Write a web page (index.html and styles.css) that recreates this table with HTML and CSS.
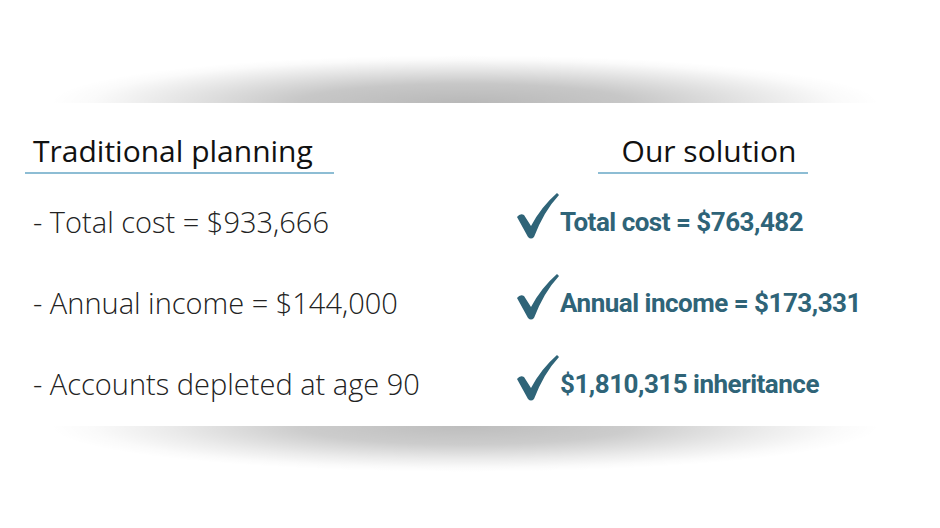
FILE: index.html
```html
<!DOCTYPE html>
<html>
<head>
<meta charset="utf-8">
<link rel="stylesheet" href="styles.css">
</head>
<body>
<div class="page">
  <div class="shadow shadow-top"></div>
  <section class="card">
    <div class="col col-left">
      <h2 class="head head-left">Traditional planning</h2>
      <p class="item">- Total cost = $933,666</p>
      <p class="item">- Annual income = $144,000</p>
      <p class="item">- Accounts depleted at age 90</p>
    </div>
    <div class="col col-right">
      <h2 class="head head-right">Our solution</h2>
      <p class="good"><svg class="check" viewBox="0 0 44 46" width="44" height="46"><path d="M1,24 Q4,20 8,22 L15,33 Q25,14 41,0 L43,2 Q28,18 18,44 Q15,47 12,44 Z"/></svg><span>Total cost = $763,482</span></p>
      <p class="good"><svg class="check" viewBox="0 0 44 46" width="44" height="46"><path d="M1,24 Q4,20 8,22 L15,33 Q25,14 41,0 L43,2 Q28,18 18,44 Q15,47 12,44 Z"/></svg><span>Annual income = $173,331</span></p>
      <p class="good"><svg class="check" viewBox="0 0 44 46" width="44" height="46"><path d="M1,24 Q4,20 8,22 L15,33 Q25,14 41,0 L43,2 Q28,18 18,44 Q15,47 12,44 Z"/></svg><span>$1,810,315 inheritance</span></p>
    </div>
  </section>
  <div class="shadow shadow-bottom"></div>
</div>
</body>
</html>
```

FILE: styles.css
```css
html, body {
  margin: 0;
  padding: 0;
  background: #ffffff;
}

.page {
  width: 940px;
  height: 528px;
  padding-top: 55px;
  box-sizing: border-box;
  display: flex;
  flex-direction: column;
}

.shadow {
  height: 48px;
  margin: 0 60px 0 50px;
}

.shadow-top {
  background: radial-gradient(ellipse 50% 100% at 50% 100%,
    rgba(0,0,0,0.28) 0%,
    rgba(0,0,0,0.22) 40%,
    rgba(0,0,0,0.09) 72%,
    rgba(0,0,0,0.02) 90%,
    rgba(0,0,0,0) 100%);
}

.shadow-bottom {
  height: 46px;
  background: radial-gradient(ellipse 50% 100% at 50% 0%,
    rgba(0,0,0,0.26) 0%,
    rgba(0,0,0,0.2) 40%,
    rgba(0,0,0,0.08) 72%,
    rgba(0,0,0,0.02) 90%,
    rgba(0,0,0,0) 100%);
}

.card {
  height: 323px;
  background: #ffffff;
  display: grid;
  grid-template-columns: 491px 1fr;
  padding: 30px 0 0 25px;
  box-sizing: border-box;
}

.col {
  display: flex;
  flex-direction: column;
}

.head {
  margin: 0;
  font-family: "Open Sans", sans-serif;
  font-weight: 400;
  font-size: 30px;
  line-height: 36px;
  color: #111111;
  padding-bottom: 3px;
  border-bottom: 2px solid #8dbdd4;
  margin-bottom: 7px;
}

.head-left {
  width: 301px;
  padding-left: 8px;
}

.head-right {
  width: 198px;
  margin-left: 82px;
  padding-left: 12px;
  text-align: center;
}

.item {
  margin: 0;
  height: 81px;
  display: flex;
  align-items: center;
  padding-left: 8px;
  font-family: "Open Sans", sans-serif;
  font-weight: 300;
  font-size: 29px;
  color: #222222;
}

.good {
  margin: 0;
  height: 81px;
  display: flex;
  align-items: center;
  font-family: Roboto, sans-serif;
  font-weight: 700;
  font-size: 26px;
  letter-spacing: -0.5px;
  color: #2f6478;
}

.check {
  fill: #2f6478;
  margin-top: -12px;
  flex: none;
}
```
